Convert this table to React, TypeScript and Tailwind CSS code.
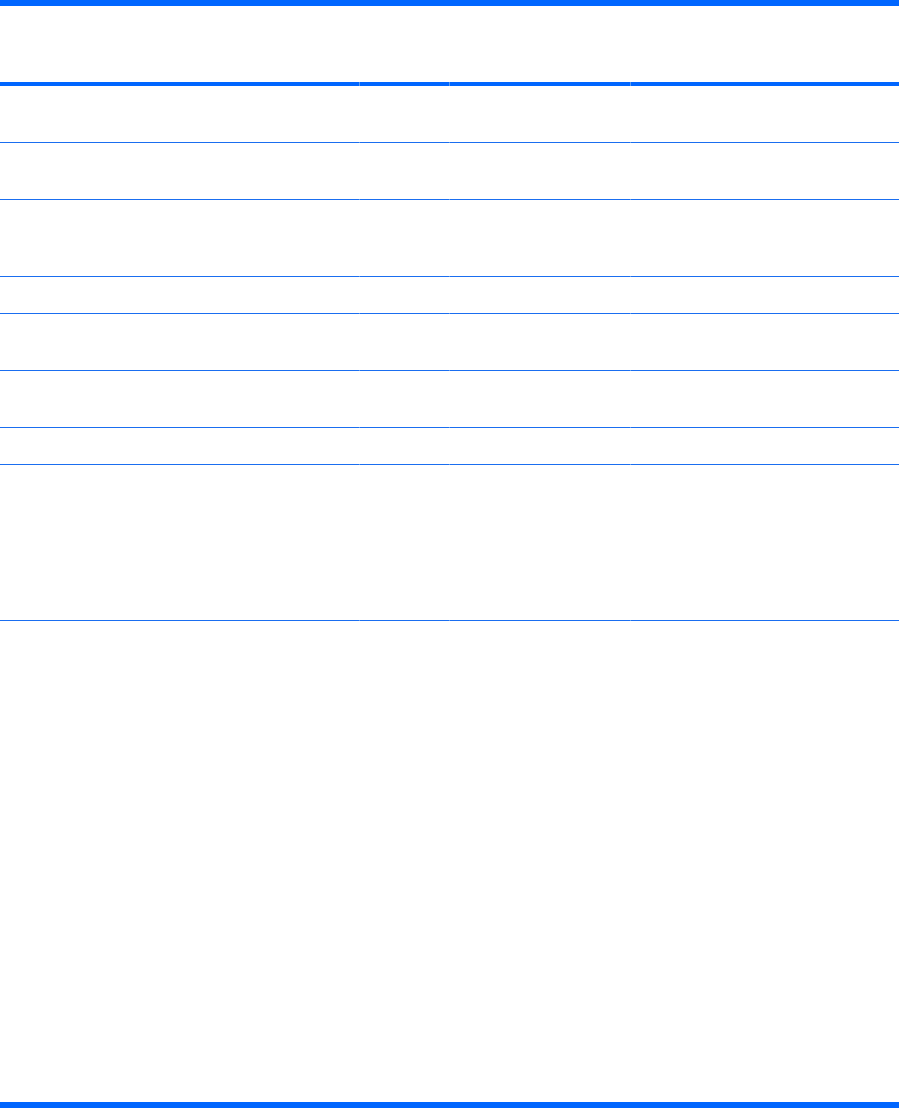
const COLS = ["w-[359px]", "w-[90px]", "w-[181px]", "w-[269px]"]

const ROW_HEIGHTS = [
  "h-[56px]",
  "h-[56px]",
  "h-[76px]",
  "h-[36px]",
  "h-[56px]",
  "h-[56px]",
  "h-[36px]",
  "h-[155px]",
  "h-[481px]"
]

const Rule = ({ thick }: { thick?: boolean }) => (
  <div className={`flex ${thick ? "h-[4px]" : "h-px"}`}>
    {COLS.map((w, i) => (
      <div
        key={i}
        className={`${w} ${thick ? "bg-[#0066ff]" : "bg-[#1a6ef0]"} ${
          i > 0 ? "border-l border-[#5c9cf2]" : ""
        }`}
      />
    ))}
  </div>
)

export default function App() {
  return (
    <div className="flex h-[1108px] w-[900px] flex-col bg-white font-['Liberation_Sans',sans-serif]">
      <div className="w-[899px]">
        <div className="h-[6px] bg-[#0066ff]" />
        <div className="flex h-[76px]">
          {COLS.map((w, i) => (
            <div key={i} className={w} />
          ))}
        </div>
        <Rule thick />
        {ROW_HEIGHTS.map((h, r) => (
          <div key={r}>
            <div className={`flex ${h}`}>
              {COLS.map((w, i) => (
                <div key={i} className={w} />
              ))}
            </div>
            {r < ROW_HEIGHTS.length - 1 && <Rule />}
          </div>
        ))}
        <div className="h-[6px] bg-[#0066ff]" />
      </div>
    </div>
  )
}
